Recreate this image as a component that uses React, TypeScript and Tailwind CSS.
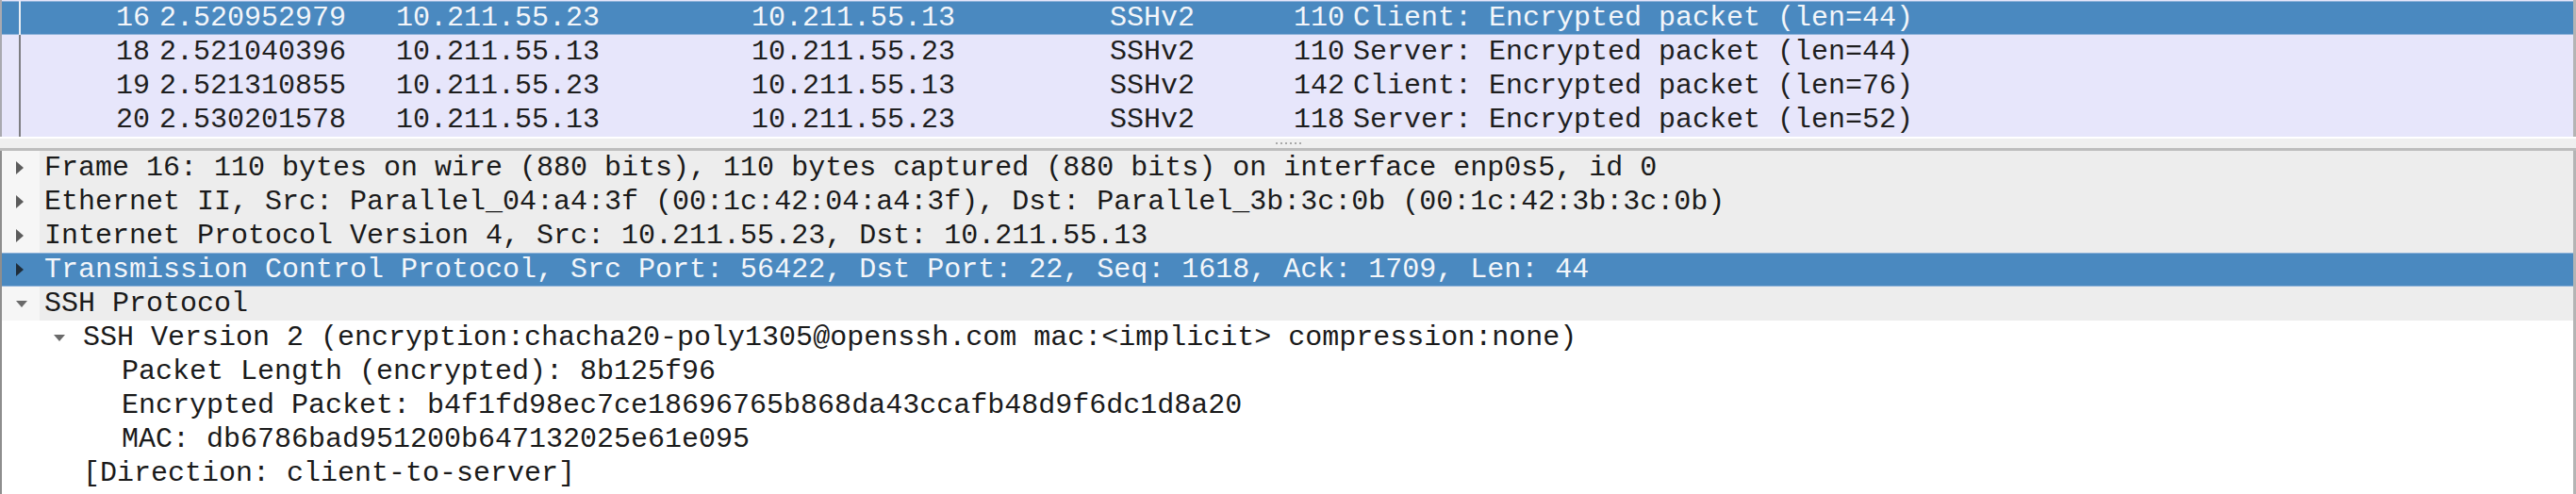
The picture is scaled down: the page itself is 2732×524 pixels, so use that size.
import React from "react";

const FONT = { fontFamily: '"Liberation Mono", "DejaVu Sans Mono", monospace' };

type Pkt = { no: string; time: string; src: string; dst: string; proto: string; len: string; info: string; sel?: boolean };

const packets: Pkt[] = [
  { no: "16", time: "2.520952979", src: "10.211.55.23", dst: "10.211.55.13", proto: "SSHv2", len: "110", info: "Client: Encrypted packet (len=44)", sel: true },
  { no: "18", time: "2.521040396", src: "10.211.55.13", dst: "10.211.55.23", proto: "SSHv2", len: "110", info: "Server: Encrypted packet (len=44)" },
  { no: "19", time: "2.521310855", src: "10.211.55.23", dst: "10.211.55.13", proto: "SSHv2", len: "142", info: "Client: Encrypted packet (len=76)" },
  { no: "20", time: "2.530201578", src: "10.211.55.13", dst: "10.211.55.23", proto: "SSHv2", len: "118", info: "Server: Encrypted packet (len=52)" },
];

function RightArrow({ light }: { light?: boolean }) {
  return (
    <svg width="8" height="14" viewBox="0 0 8 14" className="block">
      <polygon points="0,0 8,7 0,14" fill={light ? "#1f2d3a" : "#5c5c5c"} />
    </svg>
  );
}

function DownArrow() {
  return (
    <svg width="12" height="7" viewBox="0 0 12 7" className="block">
      <polygon points="0,0 12,0 6,7" fill="#6a6a6a" />
    </svg>
  );
}

function PacketRow({ p }: { p: Pkt }) {
  const rowCls = p.sel
    ? "bg-[#4a89c0] text-[#f3f6fa] border-y border-[#8fb3d9]"
    : "bg-[#e7e6fb] text-[#1e1e1e] border-y border-transparent";
  return (
    <div className={`relative flex h-[36px] items-center whitespace-pre text-[30px] leading-[34px] ${rowCls}`}>
      <div className={`absolute left-[18px] top-[-1px] bottom-[-1px] w-[2px] ${p.sel ? "bg-[#e9eef4]" : "bg-[#7d7d82]"}`} />
      <div className="w-[157px] shrink-0 text-right">{p.no}</div>
      <div className="w-[261px] shrink-0 pl-[10px]">{p.time}</div>
      <div className="w-[377px] shrink-0">{p.src}</div>
      <div className="w-[380px] shrink-0">{p.dst}</div>
      <div className="w-[123px] shrink-0">{p.proto}</div>
      <div className="w-[126px] shrink-0 text-right">{p.len}</div>
      <div className="flex-1 pl-[9px]">{p.info}</div>
    </div>
  );
}

type Det = { level: number; arrow?: "right" | "down"; text: string; sel?: boolean };

const details: Det[] = [
  { level: 0, arrow: "right", text: "Frame 16: 110 bytes on wire (880 bits), 110 bytes captured (880 bits) on interface enp0s5, id 0" },
  { level: 0, arrow: "right", text: "Ethernet II, Src: Parallel_04:a4:3f (00:1c:42:04:a4:3f), Dst: Parallel_3b:3c:0b (00:1c:42:3b:3c:0b)" },
  { level: 0, arrow: "right", text: "Internet Protocol Version 4, Src: 10.211.55.23, Dst: 10.211.55.13" },
  { level: 0, arrow: "right", text: "Transmission Control Protocol, Src Port: 56422, Dst Port: 22, Seq: 1618, Ack: 1709, Len: 44", sel: true },
  { level: 0, arrow: "down", text: "SSH Protocol" },
  { level: 1, arrow: "down", text: "SSH Version 2 (encryption:chacha20-poly1305@openssh.com mac:<implicit> compression:none)" },
  { level: 2, text: "Packet Length (encrypted): 8b125f96" },
  { level: 2, text: "Encrypted Packet: b4f1fd98ec7ce18696765b868da43ccafb48d9f6dc1d8a20" },
  { level: 2, text: "MAC: db6786bad951200b647132025e61e095" },
  { level: 1, text: "[Direction: client-to-server]" },
];

function DetailRow({ d }: { d: Det }) {
  const textCls = d.sel ? "text-[#f3f6fa]" : "text-[#1a1a1a]";
  if (d.level === 0) {
    return (
      <div className={`flex h-[36px] whitespace-pre text-[30px] leading-[34px] ${d.sel ? "bg-[#4a89c0] border-y border-[#8fb3d9]" : "bg-[#f6f6f6]"}`}>
        <div className="flex w-[40px] shrink-0 items-center pl-[15px]">
          {d.arrow === "right" ? <RightArrow light={d.sel} /> : <DownArrow />}
        </div>
        <div className={`flex flex-1 items-center pl-[5px] ${d.sel ? "" : "bg-[#ededed]"} ${textCls}`}>{d.text}</div>
      </div>
    );
  }
  return (
    <div className="flex h-[36px] items-center whitespace-pre text-[30px] leading-[34px] bg-white">
      {d.level === 1 ? (
        <div className="flex w-[67px] shrink-0 items-center pl-[55px]">{d.arrow === "down" ? <DownArrow /> : null}</div>
      ) : null}
      <div className={`${d.level === 1 ? "pl-[19px]" : "pl-[127px]"} ${textCls}`}>{d.text}</div>
    </div>
  );
}

export default function App() {
  return (
    <div className="flex h-[524px] w-[2732px] flex-col overflow-hidden bg-white" style={FONT}>
      {/* Packet list */}
      <div className="h-[145px] shrink-0 border-l-2 border-r-[3px] border-l-[#a9a9b0] border-r-[#b4b4b4] bg-[#e7e6fb] pt-[1px]">
        {packets.map((p) => (
          <PacketRow key={p.no} p={p} />
        ))}
      </div>
      {/* Splitter */}
      <div className="relative flex h-[15px] shrink-0 items-center justify-center border-t-2 border-b-[3px] border-t-white border-b-[#bdbdbd] bg-[#efefef]">
        <div className="flex gap-[3px]">
          {[0, 1, 2, 3, 4, 5].map((i) => (
            <div key={i} className="h-[2px] w-[2px] bg-[#a8a8a8]" />
          ))}
        </div>
      </div>
      {/* Details */}
      <div className="flex-1 border-l-2 border-r-[3px] border-l-[#8e8e8e] border-r-[#b4b4b4] bg-white">
        {details.map((d, i) => (
          <DetailRow key={i} d={d} />
        ))}
      </div>
    </div>
  );
}
